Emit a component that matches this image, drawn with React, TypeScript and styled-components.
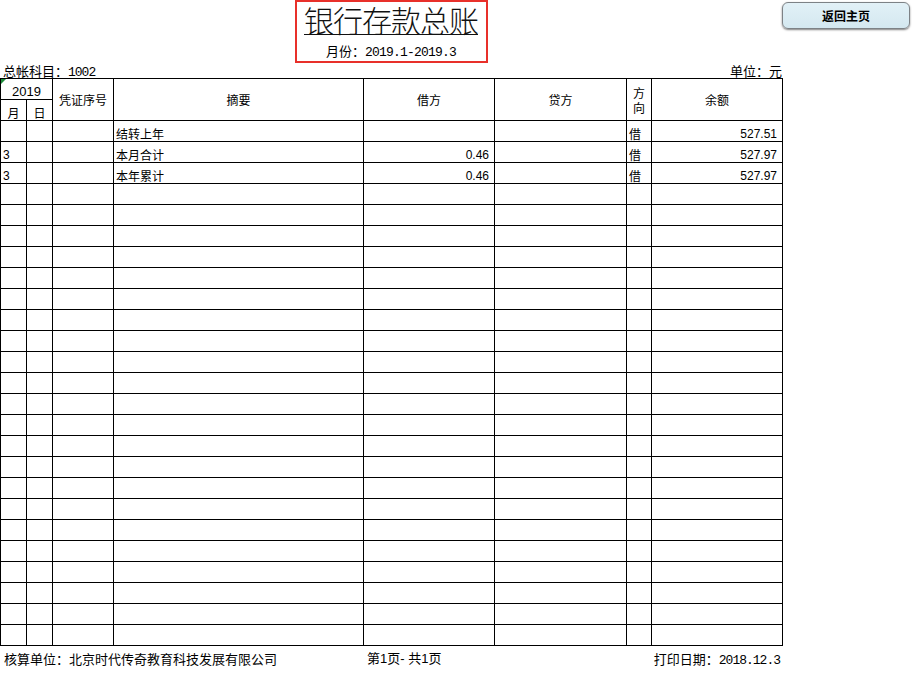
import React from "react";
import styled, { createGlobalStyle } from "styled-components";

const GlobalStyle = createGlobalStyle`
  html, body { margin: 0; padding: 0; background: #fff; }
  body { font-family: "Noto Sans CJK SC", "Liberation Sans", sans-serif; color: #000; }
`;

const COLS = "25px 25px 60px 249px 130px 131px 24px 130px";

const Page = styled.div`
  display: flex;
  align-items: flex-start;
  width: 917px;
  height: 675px;
  overflow: hidden;
`;

const Sheet = styled.div`
  width: 783px;
  display: flex;
  flex-direction: column;
`;

const TitleBox = styled.div`
  align-self: center;
  margin-left: -1px;
  box-sizing: border-box;
  width: 193px;
  height: 63px;
  border: 2px solid #e8302a;
  display: flex;
  flex-direction: column;
  align-items: center;
`;

const Title = styled.div`
  font-family: "Noto Sans CJK SC", sans-serif;
  font-size: 30px;
  line-height: 34px;
  font-weight: 300;
  text-decoration: underline;
  text-decoration-thickness: 1px;
  text-underline-offset: 2px;
  letter-spacing: -1px;
  color: #111;
`;

const SubTitle = styled.div`
  margin-top: 7px;
  font-size: 13px;
  line-height: 16px;
  white-space: nowrap;
`;

const Mono = styled.span<{ $tight?: boolean }>`
  font-family: "Liberation Mono", monospace;
  font-size: 13px;
  line-height: 1;
  letter-spacing: ${(p) => (p.$tight ? "-1px" : "-0.8px")};
`;

const MetaRow = styled.div`
  display: flex;
  justify-content: space-between;
  align-items: baseline;
  height: 15px;
  padding: 0 1px 0 3px;
  font-size: 13px;
  line-height: 15px;
  white-space: nowrap;
`;

const Grid = styled.div`
  position: relative;
  display: grid;
  grid-template-columns: ${COLS};
  grid-auto-rows: 20px;
  gap: 1px;
  background: #000;
  border: 1px solid #000;
`;

const Cell = styled.div<{
  $align?: "left" | "right" | "center";
  $mid?: boolean;
  $col?: string;
  $row?: string;
  $size?: number;
  $num?: boolean;
}>`
  background: #fff;
  display: flex;
  align-items: ${(p) => (p.$mid ? "center" : "flex-end")};
  justify-content: ${(p) =>
    p.$align === "right" ? "flex-end" : p.$align === "center" ? "center" : "flex-start"};
  text-align: center;
  padding: ${(p) => (p.$align === "right" ? "0 5px 0 0" : p.$align === "center" ? "0" : "0 0 0 2px")};
  grid-column: ${(p) => p.$col || "auto"};
  grid-row: ${(p) => p.$row || "auto"};
  font-family: ${(p) =>
    p.$num ? `"Liberation Sans", "Noto Sans CJK SC", sans-serif` : `"Noto Sans CJK SC", "Liberation Sans", sans-serif`};
  font-size: ${(p) => p.$size || 12}px;
  line-height: ${(p) => (p.$mid ? "15px" : "14px")};
  white-space: nowrap;
  overflow: hidden;
`;

const Stack = styled.span`
  display: flex;
  flex-direction: column;
  align-items: center;
  line-height: 15px;
`;

const CommentMark = styled.div`
  position: absolute;
  left: 0;
  top: 0;
  width: 0;
  height: 0;
  border-top: 5px solid #1e8c3a;
  border-right: 5px solid transparent;
`;

const Footer = styled.div`
  display: grid;
  grid-template-columns: ${COLS};
  column-gap: 1px;
  padding: 0 1px;
  height: 26px;
  align-items: center;
  font-size: 13px;
  line-height: 26px;
  white-space: nowrap;
`;

const FootLeft = styled.div`
  grid-column: 1 / 5;
  padding-left: 3px;
`;

const FootMid = styled.div`
  grid-column: 5;
  padding-left: 3px;
  font-family: "Liberation Sans", "Noto Sans CJK SC", sans-serif;
  font-size: 13px;
`;

const FootRight = styled.div`
  grid-column: 8;
  justify-self: end;
  padding-right: 2px;
`;

const HomeButton = styled.button`
  margin: 2px 0 0 -1px;
  width: 128px;
  height: 27px;
  box-sizing: border-box;
  border: 1px solid #7d8286;
  border-radius: 6px;
  background: linear-gradient(#e2f1f7, #d4e8f0);
  box-shadow: 0 1px 2px rgba(0, 0, 0, 0.5);
  font-family: "Noto Sans CJK SC", sans-serif;
  font-size: 12px;
  font-weight: 700;
  color: #000;
  padding: 0;
  cursor: pointer;
`;

type Row = [string, string, string, string, string, string, string, string];

const data: Row[] = [
  ["", "", "", "结转上年", "", "", "借", "527.51"],
  ["3", "", "", "本月合计", "0.46", "", "借", "527.97"],
  ["3", "", "", "本年累计", "0.46", "", "借", "527.97"],
];
while (data.length < 25) data.push(["", "", "", "", "", "", "", ""]);

const rightCols = new Set([4, 5, 7]);

export default function App() {
  return (
    <Page>
      <GlobalStyle />
      <Sheet>
        <TitleBox>
          <Title>银行存款总账</Title>
          <SubTitle>
            月份：<Mono>2019.1-2019.3</Mono>
          </SubTitle>
        </TitleBox>
        <MetaRow>
          <span>
            总帐科目：<Mono $tight>1002</Mono>
          </span>
          <span>单位：元</span>
        </MetaRow>
        <Grid>
          <CommentMark />
          <Cell $align="center" $col="1 / 3" $row="1" $num $size={13}>
            2019
          </Cell>
          <Cell $align="center" $mid $col="3" $row="1 / 3">凭证序号</Cell>
          <Cell $align="center" $mid $col="4" $row="1 / 3">摘要</Cell>
          <Cell $align="center" $mid $col="5" $row="1 / 3">借方</Cell>
          <Cell $align="center" $mid $col="6" $row="1 / 3">贷方</Cell>
          <Cell $align="center" $mid $col="7" $row="1 / 3">
            <Stack>
              <span>方</span>
              <span>向</span>
            </Stack>
          </Cell>
          <Cell $align="center" $mid $col="8" $row="1 / 3">余额</Cell>
          <Cell $align="center" $col="1" $row="2">月</Cell>
          <Cell $align="center" $col="2" $row="2">日</Cell>
          {data.map((row, ri) =>
            row.map((v, ci) => (
              <Cell
                key={`${ri}-${ci}`}
                $align={rightCols.has(ci) ? "right" : "left"}
                $num={/^[0-9.]+$/.test(v)}
              >
                {v}
              </Cell>
            ))
          )}
        </Grid>
        <Footer>
          <FootLeft>核算单位：北京时代传奇教育科技发展有限公司</FootLeft>
          <FootMid>第1页- 共1页</FootMid>
          <FootRight>
            打印日期：<Mono $tight>2018.12.3</Mono>
          </FootRight>
        </Footer>
      </Sheet>
      <HomeButton>返回主页</HomeButton>
    </Page>
  );
}
